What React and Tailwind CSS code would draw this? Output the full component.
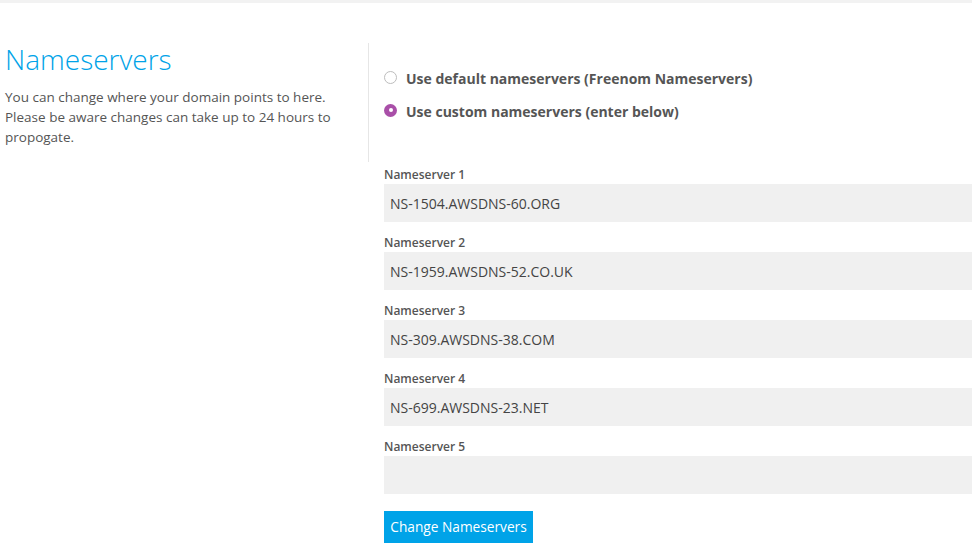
import React from "react";

const font = { fontFamily: '"Open Sans", "Noto Sans", Arial, sans-serif' };

function Field({ label, value }) {
  return (
    <div className="flex flex-col">
      <div className="h-[18px] text-[12px] leading-[18px] font-semibold text-[#555555]">{label}</div>
      <div className="h-[38px] bg-[#f0f0f0] flex items-center pl-[6px] text-[14px] text-[#444444]">{value}</div>
    </div>
  );
}

export default function App() {
  const servers = [
    "NS-1504.AWSDNS-60.ORG",
    "NS-1959.AWSDNS-52.CO.UK",
    "NS-309.AWSDNS-38.COM",
    "NS-699.AWSDNS-23.NET",
    "",
  ];
  return (
    <div className="w-[972px] h-[558px] bg-white overflow-hidden" style={font}>
      <div className="h-[3px] bg-[#f2f2f2]" />
      <div className="flex pt-[38px]">
        <div className="w-[368px] pl-[5px]">
          <h1 className="text-[28px] leading-[36px] font-light text-[#00a3e8]">Nameservers</h1>
          <p className="mt-[10px] text-[13.5px] leading-[20px] text-[#555555] pr-[30px]">
            You can change where your domain points to here. Please be aware changes can take up to 24 hours to propogate.
          </p>
        </div>
        <div className="border-l border-[#e6e6e6] mt-[2px] h-[119px] pl-[15px] pt-[26px] flex flex-col gap-[13px]">
          <label className="flex items-center gap-[9px] text-[14px] leading-[20px] font-bold text-[#555555]">
            <span className="w-[13px] h-[13px] rounded-full border border-[#bdbdbd] bg-white -mt-[4px]" />
            Use default nameservers (Freenom Nameservers)
          </label>
          <label className="flex items-center gap-[9px] text-[14px] leading-[20px] font-bold text-[#555555]">
            <span className="w-[13px] h-[13px] rounded-full bg-[#a94fa8] flex items-center justify-center -mt-[4px]">
              <span className="w-[4px] h-[4px] rounded-full bg-white" />
            </span>
            Use custom nameservers (enter below)
          </label>
        </div>
      </div>
      <div className="ml-[384px] mt-[4px] flex flex-col gap-[12px]">
        {servers.map((s, i) => (
          <Field key={i} label={`Nameserver ${i + 1}`} value={s} />
        ))}
        <div className="pt-[5px]">
          <button className="h-[32px] w-[149px] flex items-center justify-center bg-[#00a3e8] text-white text-[13.7px]">Change Nameservers</button>
        </div>
      </div>
    </div>
  );
}
